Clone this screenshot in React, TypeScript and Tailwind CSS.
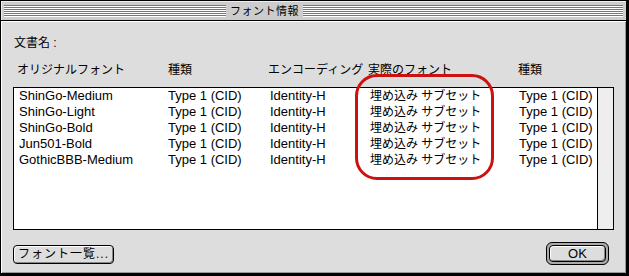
const rows = ['ShinGo-Medium', 'ShinGo-Light', 'ShinGo-Bold', 'Jun501-Bold', 'GothicBBB-Medium'];

const font = "font-['Liberation_Sans','Noto_Sans_CJK_JP',sans-serif]";
const stripes =
  'h-[12px] bg-[repeating-linear-gradient(to_bottom,#777777_0px,#777777_1px,#ffffff_1px,#ffffff_2px)]';

export default function App() {
  return (
    <div className={`w-[629px] h-[276px] bg-white ${font} text-[12px] leading-[16px] text-black`}>
      <div className="w-[629px] h-[276px] border border-black border-r-[3px] border-b-[3px] flex flex-col bg-[#dddddd]">
        {/* title bar */}
        <div className="h-[20px] bg-[#cccccc] border-b border-black flex items-center px-[3px] gap-[4px] shadow-[inset_1px_1px_0_#eeeeee]">
          <div className={`w-[222px] flex-none ${stripes}`} />
          <span className="text-[11px] leading-[14px] tracking-[0.5px]">フォント情報</span>
          <div className={`flex-1 ${stripes}`} />
        </div>

        {/* body */}
        <div className="relative flex-1 flex flex-col pl-[12px] pr-[12px] shadow-[inset_1px_1px_0_#ffffff,inset_-1px_-1px_0_#999999]">
          <div className="mt-[14px] h-[16px] pl-[1px]">文書名 :</div>

          <div className="mt-[11px] h-[16px] grid grid-cols-[151px_100px_100px_150px_1fr] pl-[4px]">
            <span>オリジナルフォント</span>
            <span>種類</span>
            <span>エンコーディング</span>
            <span>実際のフォント</span>
            <span>種類</span>
          </div>

          <div className="mt-[9px] h-[143px] w-[601px] border border-black bg-white flex">
            <div className="flex-1 pl-[5px] pt-0">
              {rows.map((r) => (
                <div key={r} className="h-[16px] grid grid-cols-[149px_102px_98px_151px_1fr] text-[13px] leading-[16px]">
                  <span>{r}</span>
                  <span>Type 1 (CID)</span>
                  <span>Identity-H</span>
                  <span className="text-[12px] pl-[2px]">埋め込み サブセット</span>
                  <span>Type 1 (CID)</span>
                </div>
              ))}
            </div>
            <div className="w-[16px] border-l border-black bg-[#eeeeee]" />
          </div>

          <div className="mt-[13px] flex items-center justify-between pr-[5px]">
            <button className="h-[19px] w-[101px] rounded-[4px] border border-black bg-[#dddddd] shadow-[inset_1px_1px_0_#ffffff,inset_-1px_-1px_0_#888888] text-[12px] leading-[16px] tracking-[1px]">
              フォント一覧...
            </button>
            <div className="h-[23px] w-[63px] rounded-[6px] border border-black bg-[#aaaaaa] p-[2px] -mt-[1px]">
              <button className="h-full w-full rounded-[4px] border border-black bg-[#dddddd] shadow-[inset_1px_1px_0_#ffffff,inset_-1px_-1px_0_#888888] text-[13px] leading-[14px]">
                OK
              </button>
            </div>
          </div>

          {/* red annotation ring */}
          <div className="absolute left-[354px] top-[53px] w-[139px] h-[106px] rounded-[22px] border-[3px] border-[#cc1111] blur-[0.4px]" />
        </div>
      </div>
    </div>
  );
}
